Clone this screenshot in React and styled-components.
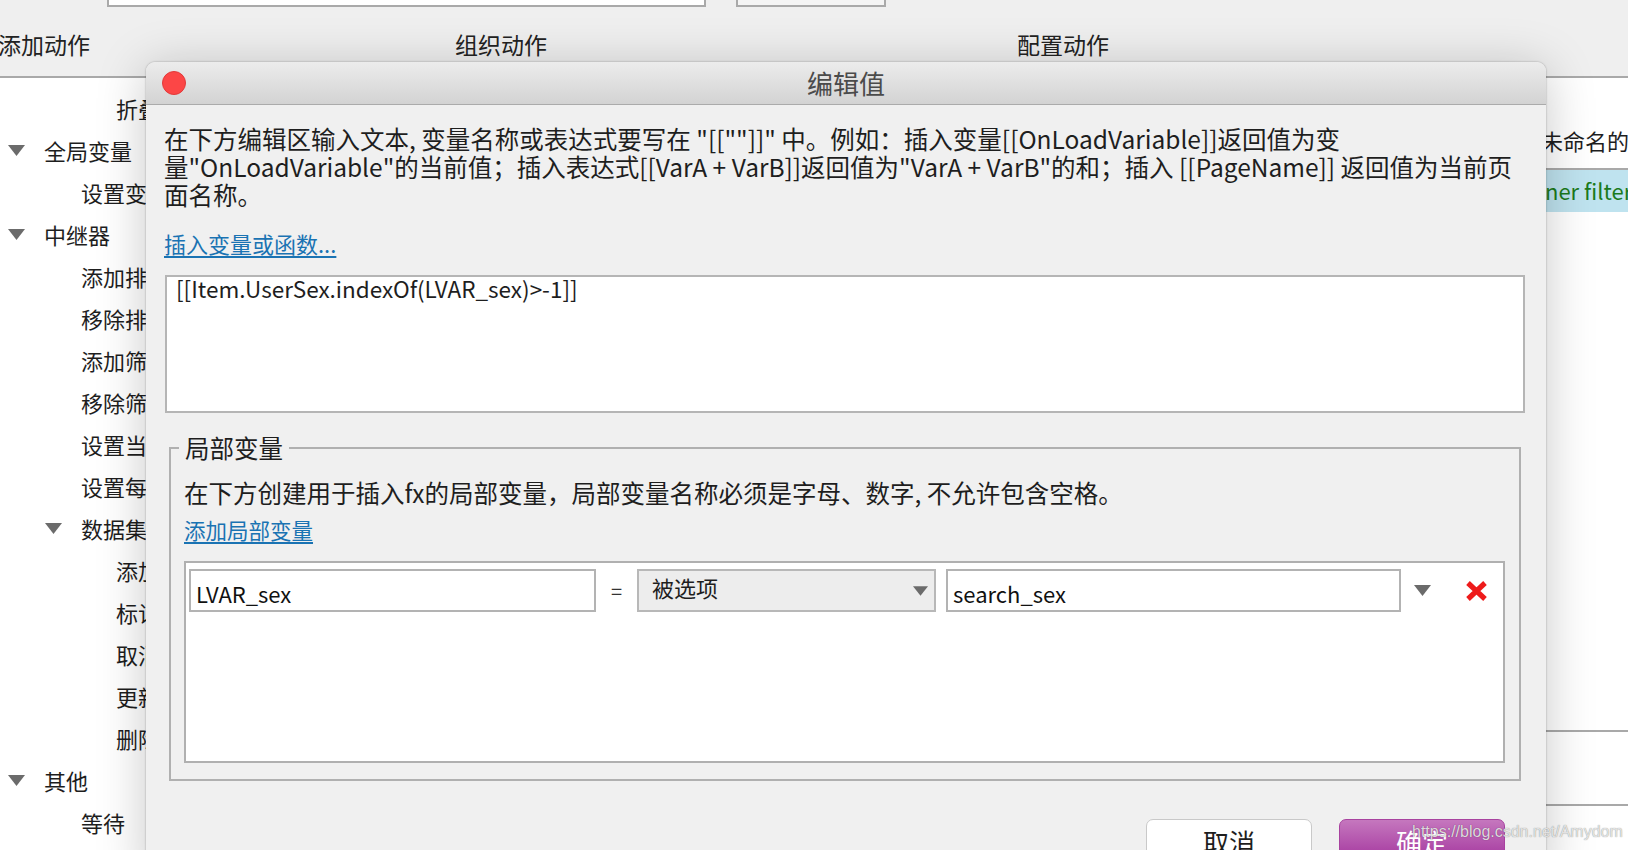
import React from "react";
import styled, { createGlobalStyle } from "styled-components";

const Global = createGlobalStyle`
  * { box-sizing: border-box; }
  html, body { margin: 0; padding: 0; background: #efefef; overflow: hidden; }
  body { font-family: "Noto Sans CJK SC", "Noto Sans", sans-serif; color: #1e1e1e; }
`;

const Page = styled.div`
  position: relative;
  width: 1628px;
  height: 850px;
  overflow: hidden;
  background: #efefef;
  display: flex;
  flex-direction: column;
`;

const TopStrip = styled.div`
  height: 9px;
  display: flex;
  align-items: flex-end;
  padding-left: 107px;
  gap: 30px;
  flex: none;
`;

const FieldBox = styled.div`
  flex: none;
  width: ${(p) => p.$w}px;
  height: 40px;
  margin-bottom: 2px;
  background: ${(p) => (p.$muted ? "#f4f4f4" : "#ffffff")};
  border: 2px solid #a9a9a9;
`;

const HeaderRow = styled.div`
  flex: none;
  height: 69px;
  padding-top: 3px;
  display: grid;
  grid-template-columns: 455px 562px 1fr;
  align-items: center;
  border-bottom: 2px solid #a9a9a9;
`;

const HeaderLabel = styled.div`
  font-size: 23px;
  line-height: 30px;
  color: #222;
  margin-left: ${(p) => p.$shift || 0}px;
`;

const Columns = styled.div`
  flex: 1;
  display: flex;
  min-height: 0;
`;

const TreePanel = styled.div`
  width: 420px;
  flex: none;
  background: #ffffff;
  padding-top: 9px;
`;

const TreeRow = styled.div`
  height: 42px;
  display: flex;
  align-items: center;
  padding-left: ${(p) => p.$x}px;
  font-size: 22px;
  white-space: nowrap;
  color: #1e1e1e;
`;

const CaretBox = styled.span`
  width: 36px;
  margin-left: -36px;
  display: inline-flex;
  align-items: center;
`;

const MidPanel = styled.div`
  flex: 1;
  background: #ffffff;
`;

const PropsPanel = styled.div`
  width: 228px;
  flex: none;
  background: #ffffff;
  display: flex;
  flex-direction: column;
`;

const PropName = styled.div`
  height: 92px;
  padding: 48px 0 0 141px;
  font-size: 22px;
  line-height: 28px;
  white-space: nowrap;
  color: #1e1e1e;
  border-bottom: 2px solid #a9a9a9;
`;

const FilterRow = styled.div`
  height: 42px;
  background: #bfe3ef;
  padding: 0 0 3px 145px;
  display: flex;
  align-items: center;
  font-size: 22px;
  color: #1b7a1b;
  white-space: nowrap;
`;

const ListRow = styled.div`
  height: ${(p) => p.$h}px;
  flex: none;
  border-bottom: 2px solid #a9a9a9;
`;

const Dialog = styled.div`
  position: absolute;
  left: 146px;
  top: 62px;
  width: 1400px;
  height: 820px;
  background: #f0f0f0;
  border-radius: 9px 9px 0 0;
  box-shadow: 0 0 2px rgba(0, 0, 0, 0.35), 0 6px 50px rgba(0, 0, 0, 0.22);
  display: flex;
  flex-direction: column;
`;

const TitleBar = styled.div`
  flex: none;
  height: 43px;
  border-radius: 9px 9px 0 0;
  background: linear-gradient(#ececec, #d3d3d3);
  border-bottom: 1px solid #ababab;
  display: grid;
  grid-template-columns: 1fr auto 1fr;
  align-items: center;
`;

const CloseDot = styled.span`
  width: 24px;
  height: 24px;
  margin-left: 16px;
  border-radius: 50%;
  background: #fc4646;
  border: 1px solid #e23a3a;
`;

const Title = styled.div`
  font-size: 26px;
  line-height: 32px;
  color: #4b4b4b;
`;

const Body = styled.div`
  flex: 1;
  padding: 20px 21px 0 18px;
  display: flex;
  flex-direction: column;
`;

const Intro = styled.div`
  font-size: 24.5px;
  line-height: 28px;
  white-space: nowrap;
  color: #1e1e1e;
`;

const LinkText = styled.a`
  display: block;
  width: fit-content;
  margin-top: ${(p) => p.$mt}px;
  font-size: ${(p) => p.$fs || 22}px;
  line-height: 28px;
  color: #1a73b3;
  text-decoration: underline;
  text-underline-offset: 3px;
  cursor: pointer;
`;

const ExprBox = styled.div`
  margin: 18px 0 0 1px;
  height: 138px;
  background: #fff;
  border: 2px solid #b5b5b5;
  padding: 0 9px;
  font-size: 22.5px;
  line-height: 22px;
  color: #1e1e1e;
`;

const Group = styled.fieldset`
  margin: 21px 4px 0 5px;
  padding: 0 14px 16px 13px;
  border: 2px solid #b0b0b0;
  min-width: 0;
`;

const Legend = styled.legend`
  margin-left: -5px;
  padding: 0 6px;
  font-size: 24.5px;
  line-height: 28px;
  color: #1e1e1e;
`;

const Hint = styled.div`
  margin-top: 17px;
  font-size: 24.5px;
  line-height: 28px;
  white-space: nowrap;
  color: #1e1e1e;
`;

const VarList = styled.div`
  margin-top: 17px;
  height: 202px;
  background: #fff;
  border: 2px solid #b0b0b0;
  padding: 6px 3px;
`;

const VarRow = styled.div`
  display: flex;
  align-items: center;
`;

const TextField = styled.div`
  flex: none;
  width: ${(p) => p.$w}px;
  height: 43px;
  border: 2px solid #b3b3b3;
  background: #fff;
  padding: 7px 5px 0;
  font-size: 22px;
  line-height: 30px;
  color: #111;
  white-space: nowrap;
`;

const Equals = styled.div`
  flex: none;
  width: 41px;
  text-align: center;
  font-size: 20px;
  color: #333;
`;

const SelectBox = styled.div`
  flex: none;
  width: 299px;
  height: 43px;
  margin-right: 10px;
  border: 2px solid #b8b8b8;
  background: #ededed;
  display: flex;
  align-items: center;
  justify-content: space-between;
  padding: 0 6px 8px 13px;
  font-size: 22px;
  color: #1e1e1e;
`;

const ArrowBox = styled.span`
  display: inline-flex;
  margin: ${(p) => p.$m || "0"};
  padding-top: ${(p) => p.$pt || 0}px;
`;

const DeleteBtn = styled.span`
  display: inline-flex;
  margin-left: 34px;
`;

const Buttons = styled.div`
  margin-top: 38px;
  padding-right: 20px;
  display: flex;
  justify-content: flex-end;
  gap: 27px;
`;

const Button = styled.button`
  width: 166px;
  height: 46px;
  border-radius: 7px;
  font-family: inherit;
  font-size: 26px;
  line-height: 40px;
  padding: 0;
  border: 1px solid ${(p) => (p.$primary ? "#a8429f" : "#c9c9c9")};
  background: ${(p) => (p.$primary ? "linear-gradient(#c577be, #a1319b)" : "#ffffff")};
  color: ${(p) => (p.$primary ? "#ffffff" : "#1e1e1e")};
`;

const Watermark = styled.div`
  position: absolute;
  left: 1412px;
  top: 820px;
  font-family: "Liberation Sans", Arial, sans-serif;
  font-size: 16px;
  line-height: 24px;
  color: rgba(238, 238, 238, 0.9);
  text-shadow: 0 0 1px rgba(0, 0, 0, 0.5);
  white-space: nowrap;
  pointer-events: none;
`;

const Caret = ({ w = 17, h = 11, color = "#6b6b6b" }) => (
  <svg width={w} height={h} viewBox="0 0 17 11">
    <polygon points="0,0 17,0 8.5,11" fill={color} />
  </svg>
);

const RedX = () => (
  <svg width="23" height="22" viewBox="0 0 23 22">
    <path d="M3 3 L20 19 M20 3 L3 19" stroke="#ee1b1b" strokeWidth="5.2" strokeLinecap="butt" />
  </svg>
);

const TEXT_X = [44, 81, 116];
const tree = [
  { d: 2, t: "折叠树节点" },
  { d: 0, c: true, t: "全局变量" },
  { d: 1, t: "设置变量值" },
  { d: 0, c: true, t: "中继器" },
  { d: 1, t: "添加排序" },
  { d: 1, t: "移除排序" },
  { d: 1, t: "添加筛选" },
  { d: 1, t: "移除筛选" },
  { d: 1, t: "设置当前显示页面" },
  { d: 1, t: "设置每页项目数量" },
  { d: 1, c: true, t: "数据集" },
  { d: 2, t: "添加行" },
  { d: 2, t: "标记行" },
  { d: 2, t: "取消标记" },
  { d: 2, t: "更新行" },
  { d: 2, t: "删除行" },
  { d: 0, c: true, t: "其他" },
  { d: 1, t: "等待" },
];

export default function App() {
  return (
    <Page>
      <Global />
      <TopStrip>
        <FieldBox $w={599} />
        <FieldBox $w={150} $muted />
      </TopStrip>
      <HeaderRow>
        <HeaderLabel $shift={-2}>添加动作</HeaderLabel>
        <HeaderLabel>组织动作</HeaderLabel>
        <HeaderLabel>配置动作</HeaderLabel>
      </HeaderRow>
      <Columns>
        <TreePanel>
          {tree.map((r, i) => (
            <TreeRow key={i} $x={TEXT_X[r.d]}>
              {r.c && (
                <CaretBox>
                  <Caret />
                </CaretBox>
              )}
              {r.t}
            </TreeRow>
          ))}
        </TreePanel>
        <MidPanel />
        <PropsPanel>
          <PropName>未命名的动态面板</PropName>
          <FilterRow>ner filter</FilterRow>
          <ListRow $h={520} />
          <ListRow $h={74} />
        </PropsPanel>
      </Columns>

      <Dialog>
        <TitleBar>
          <CloseDot />
          <Title>编辑值</Title>
          <span />
        </TitleBar>
        <Body>
          <Intro>
            在下方编辑区输入文本, 变量名称或表达式要写在 "[[""]]" 中。例如：插入变量[[OnLoadVariable]]返回值为变
            <br />
            量"OnLoadVariable"的当前值；插入表达式[[VarA + VarB]]返回值为"VarA + VarB"的和；插入 [[PageName]] 返回值为当前页
            <br />
            面名称。
          </Intro>
          <LinkText $mt={20}>插入变量或函数...</LinkText>
          <ExprBox>[[Item.UserSex.indexOf(LVAR_sex)&gt;-1]]</ExprBox>
          <Group>
            <Legend>局部变量</Legend>
            <Hint>在下方创建用于插入fx的局部变量，局部变量名称必须是字母、数字, 不允许包含空格。</Hint>
            <LinkText $mt={9} $fs={21.5}>添加局部变量</LinkText>
            <VarList>
              <VarRow>
                <TextField $w={407}>LVAR_sex</TextField>
                <Equals>=</Equals>
                <SelectBox>
                  被选项
                  <ArrowBox $pt={8}>
                    <Caret w={15} h={10} />
                  </ArrowBox>
                </SelectBox>
                <TextField $w={455}>search_sex</TextField>
                <ArrowBox $m="0 0 0 13px">
                  <Caret w={17} h={11} />
                </ArrowBox>
                <DeleteBtn>
                  <RedX />
                </DeleteBtn>
              </VarRow>
            </VarList>
          </Group>
          <Buttons>
            <Button>取消</Button>
            <Button $primary>确定</Button>
          </Buttons>
        </Body>
      </Dialog>
      <Watermark>https://blog.csdn.net/Amydom</Watermark>
    </Page>
  );
}
